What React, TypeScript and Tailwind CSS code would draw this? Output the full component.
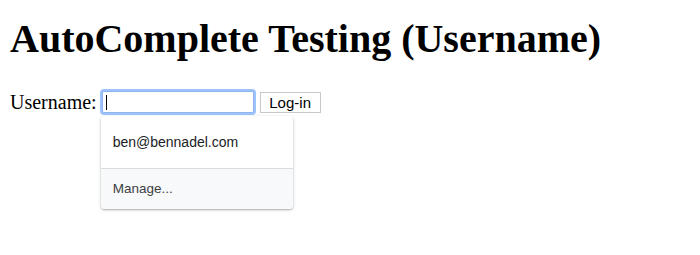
export default function App() {
  return (
    <div className="min-h-[255px] bg-white px-[10px] text-black [font-family:'Liberation_Serif',serif]">
      {/* Heading */}
      <h1 className="pt-[19px] text-[40px] leading-[40px] font-bold">
        AutoComplete Testing (Username)
      </h1>

      {/* Form row */}
      <div className="mt-[32px] flex items-center">
        <label className="text-[20px] leading-[22px]">Username:</label>
        <div className="relative ml-[5px]">
          <div className="h-[22px] w-[152px] rounded-[2px] border border-[#8fb4f0] bg-white shadow-[0_0_0_2px_#9ec3fb]">
            <div className="ml-[3px] mt-[3px] h-[15px] w-px bg-black" />
          </div>

          {/* Autofill dropdown */}
          <div className="absolute left-[-1px] top-[25px] z-10 w-[192px] overflow-hidden rounded-[4px] bg-white shadow-[0_1px_3px_rgba(60,64,67,0.35),0_1px_1px_rgba(60,64,67,0.15)] [font-family:'Liberation_Sans',Arial,sans-serif]">
            <div className="flex h-[52px] items-center px-3 text-[14px] text-[#202124]">
              ben@bennadel.com
            </div>
            <div className="h-px bg-[#dadce0]" />
            <div className="flex h-[40px] items-center bg-[#f8f9fa] px-3 text-[13.5px] text-[#3c4043]">
              Manage...
            </div>
          </div>
        </div>
        <button className="ml-[6px] h-[21px] w-[61px] border border-[#c8c8c8] bg-white text-[15px] leading-[19px] text-black [font-family:'Liberation_Sans',Arial,sans-serif]">
          Log-in
        </button>
      </div>
    </div>
  );
}
